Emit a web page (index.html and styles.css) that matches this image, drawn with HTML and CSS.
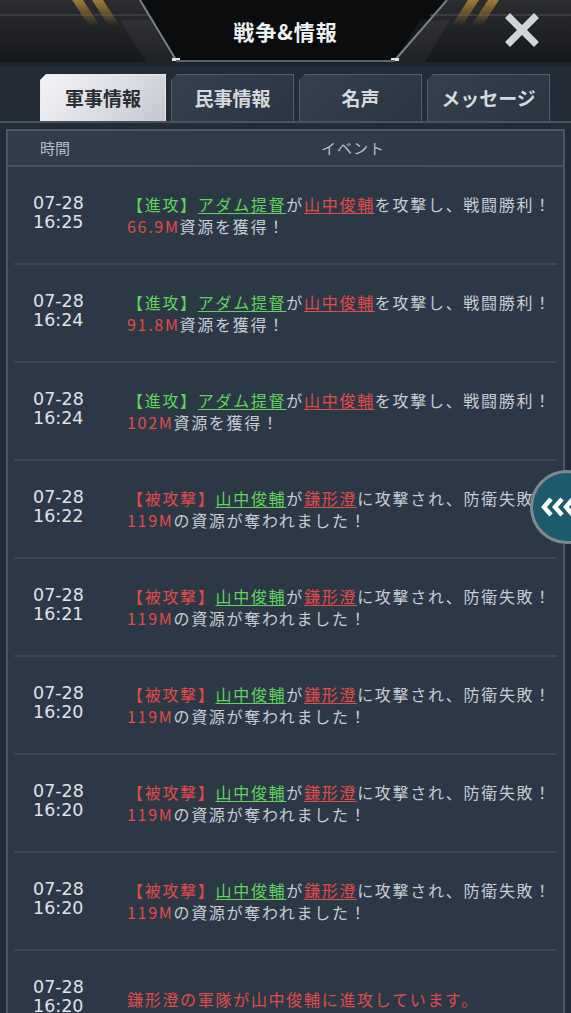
FILE: index.html
```html
<!DOCTYPE html>
<html>
<head>
  <title>戦争&amp;情報</title>
  <link rel="stylesheet" href="styles.css">
</head>
<body>
  <div class="topbar">
    <svg class="topbar-art" width="571" height="66" viewBox="0 0 571 66">
      <defs>
        <linearGradient id="sideL" x1="0" y1="0" x2="0" y2="1">
          <stop offset="0" stop-color="#2c2d30"/>
          <stop offset="1" stop-color="#16171a"/>
        </linearGradient>
        <linearGradient id="gold" x1="0" y1="0" x2="0" y2="1">
          <stop offset="0" stop-color="#9c7a33"/>
          <stop offset="1" stop-color="#9c7a33" stop-opacity="0"/>
        </linearGradient>
      </defs>
      <rect width="571" height="62" fill="#0b0c0e"/>
      <polygon points="0,0 140,0 178,62 0,62" fill="url(#sideL)"/>
      <polygon points="571,0 447,0 393,62 571,62" fill="url(#sideL)"/>
      <rect x="0" y="14" width="150" height="2" fill="#3a3b3e"/>
      <rect x="430" y="14" width="141" height="2" fill="#3a3b3e"/>
      <polygon points="72,0 83,0 100,26 89,26" fill="url(#gold)"/>
      <polygon points="92,0 103,0 120,26 109,26" fill="url(#gold)"/>
      <polygon points="468,0 479,0 462,26 451,26" fill="url(#gold)"/>
      <polygon points="488,0 499,0 482,26 471,26" fill="url(#gold)"/>
      <polygon points="120,20 150,20 176,62 146,62" fill="#ffffff" opacity="0.05"/>
      <polygon points="450,20 420,20 395,62 425,62" fill="#ffffff" opacity="0.05"/>
      <line x1="140" y1="0" x2="176" y2="60" stroke="#7c8083" stroke-width="2"/>
      <line x1="447" y1="0" x2="395" y2="60" stroke="#7c8083" stroke-width="2"/>
      <rect x="172" y="58" width="8" height="3" fill="#e8e4d8"/>
      <rect x="391" y="58" width="8" height="3" fill="#e8e4d8"/>
      <rect x="176" y="60" width="219" height="2" fill="#5e6266"/>
      <rect x="0" y="62" width="571" height="4" fill="#1a2532"/>
      <g stroke="#cfd6d8" stroke-width="7" stroke-linecap="square">
        <line x1="510" y1="18" x2="534" y2="42"/>
        <line x1="534" y1="18" x2="510" y2="42"/>
      </g>
    </svg>
    <h1 class="title">戦争&amp;情報</h1>
  </div>

  <div class="tabs">
    <div class="tab active">軍事情報</div>
    <div class="tab">民事情報</div>
    <div class="tab">名声</div>
    <div class="tab">メッセージ</div>
  </div>

  <div class="panel">
    <div class="panel-head">
      <span class="col-time">時間</span>
      <span class="col-event">イベント</span>
    </div>

    <div class="row">
      <div class="time">07-28<br>16:25</div>
      <div class="event"><span class="g">【進攻】<u>アダム提督</u></span>が<u class="r">山中俊輔</u>を攻撃し、戦闘勝利！<br><span class="r">66.9M</span>資源を獲得！</div>
    </div>
    <div class="row">
      <div class="time">07-28<br>16:24</div>
      <div class="event"><span class="g">【進攻】<u>アダム提督</u></span>が<u class="r">山中俊輔</u>を攻撃し、戦闘勝利！<br><span class="r">91.8M</span>資源を獲得！</div>
    </div>
    <div class="row">
      <div class="time">07-28<br>16:24</div>
      <div class="event"><span class="g">【進攻】<u>アダム提督</u></span>が<u class="r">山中俊輔</u>を攻撃し、戦闘勝利！<br><span class="r">102M</span>資源を獲得！</div>
    </div>
    <div class="row">
      <div class="time">07-28<br>16:22</div>
      <div class="event"><span class="r">【被攻撃】</span><u class="g">山中俊輔</u>が<u class="r">鎌形澄</u>に攻撃され、防衛失敗！<br><span class="r">119M</span>の資源が奪われました！</div>
    </div>
    <div class="row">
      <div class="time">07-28<br>16:21</div>
      <div class="event"><span class="r">【被攻撃】</span><u class="g">山中俊輔</u>が<u class="r">鎌形澄</u>に攻撃され、防衛失敗！<br><span class="r">119M</span>の資源が奪われました！</div>
    </div>
    <div class="row">
      <div class="time">07-28<br>16:20</div>
      <div class="event"><span class="r">【被攻撃】</span><u class="g">山中俊輔</u>が<u class="r">鎌形澄</u>に攻撃され、防衛失敗！<br><span class="r">119M</span>の資源が奪われました！</div>
    </div>
    <div class="row">
      <div class="time">07-28<br>16:20</div>
      <div class="event"><span class="r">【被攻撃】</span><u class="g">山中俊輔</u>が<u class="r">鎌形澄</u>に攻撃され、防衛失敗！<br><span class="r">119M</span>の資源が奪われました！</div>
    </div>
    <div class="row">
      <div class="time">07-28<br>16:20</div>
      <div class="event"><span class="r">【被攻撃】</span><u class="g">山中俊輔</u>が<u class="r">鎌形澄</u>に攻撃され、防衛失敗！<br><span class="r">119M</span>の資源が奪われました！</div>
    </div>
    <div class="row">
      <div class="time">07-28<br>16:20</div>
      <div class="event r">鎌形澄の軍隊が山中俊輔に進攻しています。</div>
    </div>
  </div>

  <div class="side-btn">
    <svg width="34" height="22" viewBox="0 0 34 22">
      <g fill="none" stroke="#ffffff" stroke-width="4.5" stroke-linejoin="miter">
        <polyline points="10,3 3,11 10,19"/>
        <polyline points="21,3 14,11 21,19"/>
        <polyline points="32,3 25,11 32,19"/>
      </g>
    </svg>
  </div>
</body>
</html>
```

FILE: styles.css
```css
html, body {
  margin: 0;
  padding: 0;
}
body {
  width: 571px;
  height: 1013px;
  overflow: hidden;
  background-color: #232c36;
  font-family: "Noto Sans CJK JP", "Noto Sans", sans-serif;
  position: relative;
}
.topbar {
  position: relative;
  height: 66px;
}
.topbar-art {
  position: absolute;
  left: 0;
  top: 0;
}
.title {
  position: relative;
  margin: 0;
  height: 62px;
  line-height: 62px;
  text-align: center;
  color: #eef2f2;
  font-size: 21px;
  font-weight: bold;
  letter-spacing: 1px;
}
.tabs {
  display: flex;
  gap: 5px;
  padding: 8px 0 0 40px;
  height: 47px;
  border-bottom: 2px solid #45525f;
}
.tab {
  box-sizing: border-box;
  width: 123px;
  height: 47px;
  line-height: 46px;
  text-align: center;
  font-size: 19px;
  font-weight: bold;
  color: #d5d9dd;
  background: linear-gradient(135deg, #354150, #2a3441);
  border: 1px solid #4f5d6c;
  border-bottom: none;
  clip-path: polygon(6px 0, 100% 0, 100% 100%, 0 100%, 0 6px);
}
.tab.active {
  width: 126px;
  color: #2b2d31;
  background: linear-gradient(135deg, #f4f4f8, #d9dbe3 60%, #c3c6cf);
  border-color: #e8e8ee;
}
.panel {
  margin: 6px 6px 0;
  background-color: #2d3846;
  border-left: 2px solid #4a5767;
  border-right: 2px solid #4a5767;
  border-top: 2px solid #4a5767;
}
.panel-head {
  display: flex;
  height: 34px;
  line-height: 34px;
  font-size: 15px;
  color: #b7bdc4;
  background: linear-gradient(90deg, #313d4b, #2f3a48);
  border-bottom: 2px solid #45525f;
}
.col-time {
  width: 127px;
  padding-left: 32px;
  box-sizing: border-box;
}
.col-event {
  flex: 1;
  text-align: center;
  padding-left: 8px;
  letter-spacing: 1px;
}
.row {
  display: flex;
  align-items: center;
  height: 96px;
  margin: 0 6px;
  padding-left: 19px;
  border-bottom: 2px solid #3a4757;
}
.time {
  width: 94px;
  flex-shrink: 0;
  font-family: "DejaVu Sans", sans-serif;
  font-size: 17.5px;
  line-height: 19px;
  margin-bottom: 5px;
  color: #dfe3e6;
}
.event {
  font-size: 16px;
  line-height: 22px;
  letter-spacing: 1.7px;
  color: #c6ccd2;
  white-space: nowrap;
}
.g {
  color: #5fd35c;
}
.r {
  color: #e14a4a;
}
u {
  text-underline-offset: 2px;
}
.side-btn {
  position: absolute;
  left: 530px;
  top: 470px;
  width: 74px;
  height: 74px;
  border-radius: 50%;
  background-color: #1d5a6c;
  border: 3px solid #7f888f;
  display: flex;
  align-items: center;
  padding-left: 8px;
  box-sizing: border-box;
}
```
